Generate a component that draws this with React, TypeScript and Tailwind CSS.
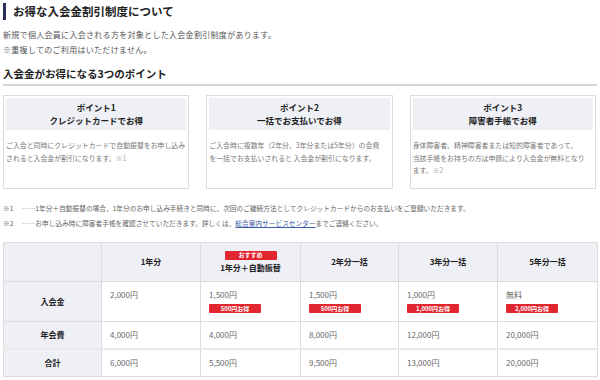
import React from "react";

type Point = { title: string; sub: string; lines: React.ReactNode[] };

const points: Point[] = [
  {
    title: "ポイント1",
    sub: "クレジットカードでお得",
    lines: [
      "ご入会と同時にクレジットカードで自動振替をお申し込み",
      <>されると入会金が割引になります。<span className="text-[#aaa]">※1</span></>,
    ],
  },
  {
    title: "ポイント2",
    sub: "一括でお支払いでお得",
    lines: [
      "ご入会時に複数年（2年分、3年分または5年分）の会費",
      "を一括でお支払いされると 入会金が割引になります。",
    ],
  },
  {
    title: "ポイント3",
    sub: "障害者手帳でお得",
    lines: [
      "身体障害者、精神障害者または知的障害者であって、",
      "当該手帳をお持ちの方は申請により入会金が無料となり",
      <>ます。<span className="text-[#aaa]">※2</span></>,
    ],
  },
];

type Col = { head: string; badge?: boolean; fee: string; save?: string; annual: string; total: string };

const cols: Col[] = [
  { head: "1年分", fee: "2,000円", annual: "4,000円", total: "6,000円" },
  { head: "1年分＋自動振替", badge: true, fee: "1,500円", save: "500円お得", annual: "4,000円", total: "5,500円" },
  { head: "2年分一括", fee: "1,500円", save: "500円お得", annual: "8,000円", total: "9,500円" },
  { head: "3年分一括", fee: "1,000円", save: "1,000円お得", annual: "12,000円", total: "13,000円" },
  { head: "5年分一括", fee: "無料", save: "2,000円お得", annual: "20,000円", total: "20,000円" },
];

function RedTag({ children }: { children: React.ReactNode }) {
  return (
    <div className="flex h-[9px] w-[52px] items-center justify-center rounded-[1px] bg-[#e1262f] text-[6px] font-bold leading-none text-white">
      {children}
    </div>
  );
}

export default function App() {
  return (
    <div className="h-[380px] w-[600px] overflow-hidden bg-white px-[3px] pt-[3px] font-['Noto_Sans_CJK_JP','Noto_Sans',sans-serif] text-[#333]">
      <div className="flex h-[17px] items-center gap-[7px]">
        <div className="h-[17px] w-[3px] bg-[#2a2f5b]" />
        <h1 className="text-[11.5px] font-bold leading-none text-[#222]">お得な入会金割引制度について</h1>
      </div>

      <div className="mt-[7px] text-[8px] leading-[15px] tracking-[0.3px] text-[#555]">
        <p>新規で個人会員に入会される方を対象とした入会金割引制度があります。</p>
        <p>※重複してのご利用はいただけません。</p>
      </div>

      <h2 className="mt-[10px] border-b-2 border-[#d3d5dc] pb-[3px] text-[10.5px] font-bold leading-[14px] text-[#222]">
        入会金がお得になる3つのポイント
      </h2>

      <div className="mt-[9px] grid grid-cols-3 gap-[17px] pr-[1px]">
        {points.map((p) => (
          <div key={p.title} className="h-[94px] border border-[#dcdcdc] p-[2px]">
            <div className="flex h-[32px] flex-col items-center justify-center bg-[#eef0f5] text-[8.5px] font-bold leading-[13px] text-[#222]">
              <span>{p.title}</span>
              <span>{p.sub}</span>
            </div>
            <div className="mt-[9px] whitespace-nowrap text-[6.9px] leading-[12.5px] text-[#777]">
              {p.lines.map((l, i) => (
                <p key={i}>{l}</p>
              ))}
            </div>
          </div>
        ))}
      </div>

      <div className="mt-[12px] whitespace-nowrap text-[6.7px] leading-[15px] text-[#666]">
        <p className="flex">
          <span className="w-[19px]">※1</span>
          <span>……1年分＋自動振替の場合、1年分のお申し込み手続きと同時に、次回のご継続方法としてクレジットカードからのお支払いをご登録いただきます。</span>
        </p>
        <p className="flex">
          <span className="w-[19px]">※2</span>
          <span>
            ……お申し込み時に障害者手帳を確認させていただきます。詳しくは、
            <span className="text-[#3a5ba5] underline">総合案内サービスセンター</span>
            までご連絡ください。
          </span>
        </p>
      </div>

      <table className="mt-[11px] w-[594px] table-fixed border-collapse text-[8px] leading-[12px]">
        <colgroup>
          <col className="w-[98px]" />
          <col className="w-[99px]" />
          <col className="w-[100px]" />
          <col className="w-[98px]" />
          <col className="w-[99px]" />
          <col className="w-[100px]" />
        </colgroup>
        <thead>
          <tr className="h-[39px] bg-[#eff0f6]">
            <th className="border border-[#dcdcdc]" />
            {cols.map((c) => (
              <th key={c.head} className="border border-[#dcdcdc] align-middle font-bold text-[#222]">
                <div className="flex flex-col items-center gap-[2px]">
                  {c.badge && <RedTag>おすすめ</RedTag>}
                  <span>{c.head}</span>
                </div>
              </th>
            ))}
          </tr>
        </thead>
        <tbody className="text-[#666]">
          <tr className="h-[40px]">
            <th className="border border-[#dcdcdc] bg-[#eff0f6] font-bold text-[#222]">入会金</th>
            {cols.map((c) => (
              <td key={c.head} className="border border-[#dcdcdc] px-[8px] pt-[7px] align-top">
                <div>{c.fee}</div>
                {c.save && (
                  <div className="mt-[3px]">
                    <RedTag>{c.save}</RedTag>
                  </div>
                )}
              </td>
            ))}
          </tr>
          <tr className="h-[27px]">
            <th className="border border-[#dcdcdc] bg-[#eff0f6] font-bold text-[#222]">年会費</th>
            {cols.map((c) => (
              <td key={c.head} className="border border-[#dcdcdc] px-[8px]">{c.annual}</td>
            ))}
          </tr>
          <tr className="h-[28px]">
            <th className="border border-[#dcdcdc] border-t-2 border-t-[#e9e9e9] bg-[#eff0f6] font-bold text-[#222]">合計</th>
            {cols.map((c) => (
              <td key={c.head} className="border border-[#dcdcdc] border-t-2 border-t-[#e9e9e9] px-[8px]">{c.total}</td>
            ))}
          </tr>
        </tbody>
      </table>
    </div>
  );
}
